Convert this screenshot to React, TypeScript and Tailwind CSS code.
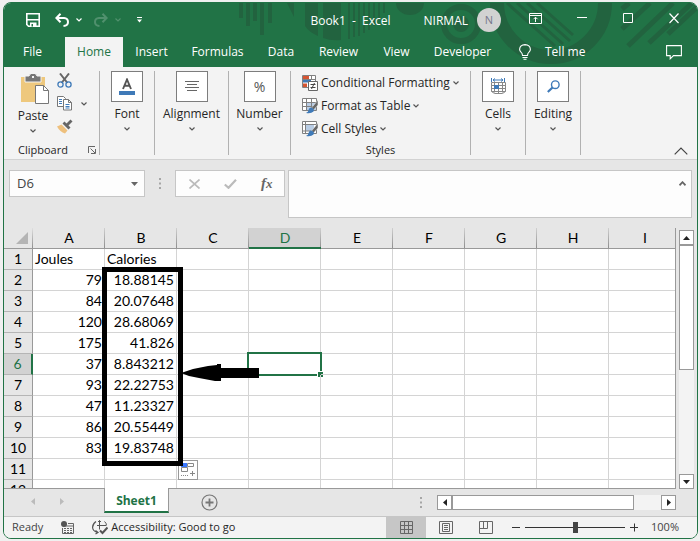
import type { ReactNode } from "react";
import { useState } from "react";

const columns = ["A", "B", "C", "D", "E", "F", "G", "H", "I"];

const data: string[][] = [
  ["Joules", "Calories"],
  ["79", "18.88145"],
  ["84", "20.07648"],
  ["120", "28.68069"],
  ["175", "41.826"],
  ["37", "8.843212"],
  ["93", "22.22753"],
  ["47", "11.23327"],
  ["86", "20.55449"],
  ["83", "19.83748"],
  [],
  [],
];

const tabs = [
  { name: "File", width: "w-[61px] pr-1" },
  { name: "Home", width: "w-[58px]" },
  { name: "Insert", width: "w-[57px]" },
  { name: "Formulas", width: "w-[75px]" },
  { name: "Data", width: "w-[52px]" },
  { name: "Review", width: "w-[63px]" },
  { name: "View", width: "w-[53px]" },
  { name: "Developer", width: "w-[79px]" },
];

function Chevron({ className = "" }: { className?: string }) {
  return (
    <svg width="6" height="4" viewBox="0 0 6 4" fill="none" stroke="currentColor" strokeWidth="1.2" className={className}>
      <path d="M0.5 0.5 L3 3 L5.5 0.5" />
    </svg>
  );
}

function Dots() {
  return (
    <svg width="2" height="11" viewBox="0 0 2 11" fill="#a6a6a6">
      <path d="M0 0h2v2H0zM0 4.5h2v2H0zM0 9h2v2H0z" />
    </svg>
  );
}

function TitlePattern() {
  return (
    <svg className="absolute top-0 right-0" width="693" height="64" viewBox="4 3 693 64" fill="#22633f">
      <path d="M239 3h4v15h-4zM246 3h4v23h-4zM253 3h4v18h-4zM260 3h4v32h-4zM268 3h4v20h-4z" />
      <path d="M287 3h7v14z" />
      <path d="M305 3h13v33q-9 -4 -13 -10zM323 3h18v37q-10 1 -18 -2z" />
      <path d="M348 3h2v36h-2zM353 3h2v34h-2zM358 3h2v33h-2zM363 3h2v30h-2zM368 3h2v27h-2zM373 3h2v23h-2zM378 3h2v17h-2zM383 3h2v10h-2z" />
      <path d="M396 3h28a14 12 0 0 1 -28 0z" />
      <circle cx="461" cy="24" r="17" fill="none" stroke="#22633f" strokeWidth="6" />
      <circle cx="461" cy="24" r="8" />
      <circle cx="551" cy="3" r="54" fill="none" stroke="#22633f" strokeWidth="14" />
      <g stroke="#22633f" strokeWidth="3">
        <path d="M507 3l48 43M517 3l46 41M527 3l43 38M537 3l36 32" />
        <path d="M628 46l45 -43M649 43l43 -40M622 29l28 -26M622 9l7 -6M668 34l29 -27" strokeWidth="5" />
      </g>
    </svg>
  );
}

function TitleBar() {
  return (
    <div className="relative flex h-[34px] items-center text-white">
      <div className="flex flex-1 items-center">
        <button aria-label="Save" className="ml-[22px]">
          <svg width="14" height="14" viewBox="0 0 14 14" fill="none" stroke="#fff" strokeWidth="1.6">
            <path d="M0.8 0.8h12.4v12.4H2.5L0.8 11.5zM1 6.7h12" />
            <path d="M4 9.5h6.5v4H4z" fill="#fff" stroke="none" />
            <path d="M5.5 11h1.5v2.5H5.5z" fill="#217346" stroke="none" />
          </svg>
        </button>
        <button aria-label="Undo" className="ml-[15px]">
          <svg width="14" height="14" viewBox="0 0 14 14" fill="none" stroke="#fff" strokeWidth="2">
            <path d="M5.5 0.8L1.4 5L5.5 9.2M1.5 5H9q4 0.3 4 4t-4.5 4" />
          </svg>
        </button>
        <Chevron className="ml-[7px]" />
        <button aria-label="Redo" className="ml-3 text-[#50906d]">
          <svg width="14" height="14" viewBox="0 0 14 14" fill="none" stroke="currentColor" strokeWidth="2">
            <path d="M8.5 0.8L12.6 5L8.5 9.2M12.5 5H5q-4 0.3 -4 4t4.5 4" />
          </svg>
        </button>
        <Chevron className="ml-[7px] text-[#50906d]" />
        <button aria-label="Customize Quick Access Toolbar" className="ml-4">
          <svg width="5" height="6" viewBox="0 0 5 6" fill="#fff">
            <path d="M0 0h5v1H0zM0 2.5h5L2.5 5.5z" />
          </svg>
        </button>
      </div>
      <span className="mt-[2px] whitespace-pre">Book1  -  Excel</span>
      <div className="flex flex-1 items-center justify-end">
        <span className="mt-[2px]">NIRMAL</span>
        <span className="ml-[9px] flex size-6 items-center justify-center rounded-full bg-[#d2d2d2] text-[11px] text-[#77778c]">N</span>
        <button aria-label="Ribbon Display Options" className="mb-[3px] ml-7">
          <svg width="13" height="11" viewBox="0 0 13 11" fill="none" stroke="#fff">
            <path d="M0.5 0.5h12v10H0.5zM0.5 2.5h12M6.5 9V4.5M4.5 6.2l2 -2l2 2" />
          </svg>
        </button>
        <button aria-label="Minimize" className="mb-[3px] ml-[35px]">
          <svg width="10" height="11" viewBox="0 0 10 11" stroke="#fff">
            <path d="M0 4.5h10" />
          </svg>
        </button>
        <button aria-label="Maximize" className="mb-[3px] ml-9">
          <svg width="10" height="11" viewBox="0 0 10 11" fill="none" stroke="#fff">
            <path d="M0.5 0.5h9v9h-9z" />
          </svg>
        </button>
        <button aria-label="Close" className="mr-[18px] mb-[3px] ml-9">
          <svg width="10" height="11" viewBox="0 0 10 11" stroke="#fff" strokeWidth="1.2">
            <path d="M0.5 0.5l9 9.5M9.5 0.5l-9 9.5" />
          </svg>
        </button>
      </div>
    </div>
  );
}

function TabBar() {
  return (
    <div className="relative flex h-[30px] text-white">
      {tabs.map((tab) => (
        <button
          key={tab.name}
          className={`${tab.width} ${tab.name === "Home" ? "bg-[#f3f3f3] text-[#217346]" : ""}`}
        >
          {tab.name}
        </button>
      ))}
      <button className="ml-[17px] flex items-center gap-[14px]">
        <svg width="12" height="16" viewBox="0 0 12 16" fill="none" stroke="#fff" strokeWidth="1.1">
          <path d="M3.5 11.5Q3.5 9.5 2 8.2Q0.6 6.8 0.6 5.2Q1 0.8 6 0.6Q11 0.8 11.4 5.2Q11.4 6.8 10 8.2Q8.5 9.5 8.5 11.5zM3.5 13.5h5M4.5 15.3h3" />
        </svg>
        Tell me
      </button>
      <button aria-label="Comments" className="mr-[15px] ml-auto">
        <svg width="16" height="15" viewBox="0 0 16 15" fill="none" stroke="#fff" strokeWidth="1.1">
          <path d="M0.6 0.6h14.8v10H7.5L4.2 13.8V10.6H0.6z" />
        </svg>
      </button>
    </div>
  );
}

function LargeButton({ label, width, children }: { label: string; width: string; children: ReactNode }) {
  return (
    <div className={`${width} shrink-0 border-r border-[#b1b1b1]`}>
      <button className="flex w-full flex-col items-center">
        <span className="flex h-[31px] w-8 items-center justify-center border border-[#7d7d7d] bg-white">{children}</span>
        <span className="mt-[3px] leading-[18px]">{label}</span>
        <Chevron className="mt-1 text-[#555]" />
      </button>
    </div>
  );
}

function BrushTable({ filled }: { filled: boolean }) {
  return (
    <svg width="16" height="16" viewBox="0 0 16 16" fill="none">
      <path d="M0.5 0.5h14v12h-14z" fill="#fff" />
      <path d={filled ? "M4 4h8v6H4z" : "M5 5h9v7H5z"} fill="#b9cde5" />
      <path
        d={filled ? "M0.5 0.5h14v12h-14zM0.5 3.5h14M3.5 0.5v12M0.5 10h9" : "M0.5 0.5h14v12h-14zM0.5 4.5h14M0.5 8.5h14M4.5 0.5v12M9.5 0.5v12"}
        stroke="#808080"
      />
      <path d="M16 2v5L11.5 12L9.5 10z" fill="#666" stroke="#f3f3f3" strokeWidth="0.5" />
      <path d="M9 9.5Q13 10.5 11.5 13.5Q9 16 4 15Q6.5 14 6.5 12Q7 9.5 9 9.5z" fill="#3f7ab8" />
    </svg>
  );
}

function Ribbon() {
  return (
    <div className="border-b border-[#d2d2d2] bg-[#f3f3f3] text-[#262626]">
      <div className="flex h-[92px] pt-1 pb-1">
        <div className="relative flex w-24 shrink-0 flex-col border-r border-[#b1b1b1]">
          <div className="flex">
            <button className="ml-[13px] flex w-8 flex-col items-center pt-[3px]">
              <svg width="28" height="31" viewBox="0 0 28 31" className="ml-1" fill="none">
                <path d="M0 3h24v25H0z" fill="#eec87d" />
                <path d="M4 2h4q1-3 4-3t4 3h4v6H4z" fill="#777" stroke="#f3f3f3" />
                <path d="M11 2h2v2h-2z" fill="#f3f3f3" />
                <path d="M14.5 11.5h8l5 5v13h-13z" fill="#fff" stroke="#777" />
                <path d="M22.5 11.5v5h5" stroke="#777" />
              </svg>
              <span className="mt-[2px] leading-[18px]">Paste</span>
              <Chevron className="mt-1 text-[#555]" />
            </button>
            <div className="ml-2 flex flex-col items-start gap-2 pt-[2px]">
              <button aria-label="Cut">
                <svg width="15" height="15" viewBox="0 0 15 15" fill="none">
                  <path d="M3 0.5L10.5 10M12 0.5L4.5 10" stroke="#666" strokeWidth="2" />
                  <circle cx="3.5" cy="11.5" r="2.6" stroke="#3f7ab8" strokeWidth="1.3" />
                  <circle cx="11.5" cy="11.5" r="2.6" stroke="#3f7ab8" strokeWidth="1.3" />
                </svg>
              </button>
              <button aria-label="Copy" className="flex items-center gap-[9px]">
                <svg width="15" height="15" viewBox="0 0 15 15" fill="none">
                  <path d="M0.5 0.5h6l2 2v8h-8z" fill="#fff" stroke="#777" />
                  <path d="M2 3.5h3M2 5.5h3M2 7.5h3" stroke="#3f7ab8" />
                  <path d="M6.5 3.5h5l3 3v7.5h-8z" fill="#fff" stroke="#777" />
                  <path d="M11.5 3.5v3h3" stroke="#777" />
                  <path d="M8.5 8.5h4M8.5 10.5h4M8.5 12h4" stroke="#3f7ab8" />
                </svg>
                <Chevron className="text-[#555]" />
              </button>
              <button aria-label="Format Painter">
                <svg width="16" height="15" viewBox="0 0 16 15">
                  <path d="M0 7.5L4.5 5.5L10.5 11.5L8 14.5Q3 13 0 7.5z" fill="#eec07d" />
                  <path d="M5.5 4.5L7.5 2.5L9.5 4.5L13.5 0.5L15.5 2.5L11.5 6.5L13.5 8.5L11.5 10.5z" fill="#666" />
                </svg>
              </button>
            </div>
          </div>
          <div className="mt-auto flex h-[10px] items-center pl-[14px] text-[11px] leading-[10px]">
            Clipboard
            <button aria-label="Clipboard settings" className="mr-[3px] ml-auto">
              <svg width="8" height="8" viewBox="0 0 8 8" fill="none" stroke="#666">
                <path d="M0.5 7V0.5H7M2.5 2.5L7 7M7.5 3v4.5H3" />
              </svg>
            </button>
          </div>
        </div>
        <LargeButton label="Font" width="w-[55px]">
          <svg width="16" height="18" viewBox="0 0 16 18">
            <path d="M4 11L8 1.5L12 11M5.5 7.8h5" fill="none" stroke="#555" strokeWidth="1.9" />
            <path d="M0 13h16v4H0z" fill="#3f7ab8" />
          </svg>
        </LargeButton>
        <LargeButton label="Alignment" width="w-[74px]">
          <svg width="14" height="11" viewBox="0 0 14 11" stroke="#666">
            <path d="M0 0.5h14M2 3.5h10M0 6.5h14M2 9.5h10" />
          </svg>
        </LargeButton>
        <LargeButton label="Number" width="w-[62px]">
          <span className="text-sm text-[#555]">%</span>
        </LargeButton>
        <div className="flex w-[180px] shrink-0 flex-col border-r border-[#b1b1b1] pl-[11px]">
          <button className="flex h-[23px] shrink-0 items-center gap-[3px] whitespace-nowrap">
            <svg width="16" height="16" viewBox="0 0 16 16" fill="none">
              <path d="M0.5 0.5h13v12h-13z" fill="#fff" stroke="#808080" />
              <path d="M1 1h6v3H1zM1 8.5h4v3.5H1z" fill="#d65532" />
              <path d="M1 4.5h8v3H1z" fill="#3f7ab8" />
              <path d="M0.5 4.5h13M9.5 0.5v4" stroke="#808080" />
              <path d="M6.5 6.5h9v9h-9z" fill="#fff" stroke="#666" />
              <path d="M8.5 9.5h5M8.5 12.5h5M12.5 8l-3 6" stroke="#444" />
            </svg>
            Conditional Formatting
            <Chevron className="text-[#555]" />
          </button>
          <button className="flex h-[23px] shrink-0 items-center gap-[3px] whitespace-nowrap">
            <BrushTable filled={false} />
            Format as Table
            <Chevron className="text-[#555]" />
          </button>
          <button className="flex h-[23px] shrink-0 items-center gap-[3px] whitespace-nowrap">
            <BrushTable filled />
            Cell Styles
            <Chevron className="text-[#555]" />
          </button>
          <span className="mt-auto mr-[11px] text-center text-[11px] leading-[10px]">Styles</span>
        </div>
        <LargeButton label="Cells" width="w-[55px]">
          <svg width="15" height="17" viewBox="0 0 15 17" fill="none">
            <path d="M0.5 0v4M13.5 0v4M2 2h10M4 0.5L2 2l2 1.5M10 0.5L12 2l-2 1.5" stroke="#3f7ab8" />
            <path d="M0.5 4.5h14v9l-3 2h-8l-3 -2zM0.5 7.5h14M0.5 10.5h14M0.5 13.5h14M3.5 4.5v10M7.5 4.5v11M11.5 4.5v10" stroke="#888" />
            <path d="M3 7h5v4H3z" fill="#3f7ab8" />
          </svg>
        </LargeButton>
        <LargeButton label="Editing" width="w-[55px]">
          <svg width="13" height="13" viewBox="0 0 13 13" fill="none" stroke="#3f7ab8">
            <circle cx="8.3" cy="4.7" r="3.8" strokeWidth="1.4" />
            <path d="M5.5 7.5L0.8 12" strokeWidth="2.2" />
          </svg>
        </LargeButton>
        <button aria-label="Collapse the Ribbon" className="mt-auto mr-[9px] ml-auto">
          <svg width="14" height="8" viewBox="0 0 14 8" fill="none" stroke="#444" strokeWidth="1.2" className="block">
            <path d="M0.7 7.3L7 1L13.3 7.3" />
          </svg>
        </button>
      </div>
    </div>
  );
}

function FormulaBar() {
  return (
    <div className="flex h-[68px] shrink-0 items-start bg-[#e6e6e6] pt-[10px] pr-[5px] pl-[5px]">
      <div className="flex h-[27px] w-[136px] items-center border border-[#c6c6c6] bg-[#fdfdfd] pr-[6px] pl-[7px]">
        <input aria-label="Name Box" defaultValue="D6" className="w-full min-w-0 bg-transparent text-[13px] text-[#444] outline-none" />
        <svg width="7" height="4" viewBox="0 0 7 4" fill="#666" className="shrink-0">
          <path d="M0 0h7L3.5 4z" />
        </svg>
      </div>
      <div className="flex h-[27px] w-[30px] items-center justify-center">
        <Dots />
      </div>
      <div className="flex h-[27px] w-[110px] items-center border border-[#c6c6c6] bg-[#fdfdfd] pl-[13px] text-[#bbb]">
        <button aria-label="Cancel">
          <svg width="11" height="10" viewBox="0 0 11 10" fill="none" stroke="currentColor" strokeWidth="1.7">
            <path d="M0.5 0.5l10 9M10.5 0.5l-10 9" />
          </svg>
        </button>
        <button aria-label="Enter" className="ml-6">
          <svg width="13" height="10" viewBox="0 0 13 10" fill="none" stroke="currentColor" strokeWidth="2.2">
            <path d="M0.8 5.5L4.5 8.8L12 0.8" />
          </svg>
        </button>
        <button
          aria-label="Insert Function"
          className="ml-6 font-['Liberation_Serif',serif] text-[15px] leading-4 font-bold text-[#666] italic"
        >
          f<span className="text-[13px]">x</span>
        </button>
      </div>
      <div className="ml-[3px] flex h-12 flex-1 items-start border border-[#c6c6c6] bg-[#fdfdfd] pr-[5px]">
        <input aria-label="Formula Bar" className="h-6 min-w-0 flex-1 bg-transparent px-2 outline-none" />
        <button aria-label="Collapse Formula Bar" className="mt-[10px]">
          <svg width="7" height="5" viewBox="0 0 7 5" fill="none" stroke="#666" strokeWidth="1.8" className="block">
            <path d="M0.5 4.3L3.5 1.2L6.5 4.3" />
          </svg>
        </button>
      </div>
    </div>
  );
}

function Sheet() {
  return (
    <div className="relative min-w-0 flex-1 overflow-hidden border-r border-b border-[#999] bg-white font-[Lato,sans-serif] text-sm text-black">
      <table className="w-full min-w-[677px] table-fixed border-separate border-spacing-0">
        <colgroup>
          <col className="w-[29px]" />
          {columns.map((column, i) => (
            <col key={column} className={i < columns.length - 1 ? "w-[72px]" : ""} />
          ))}
        </colgroup>
        <thead>
          <tr className="h-[21px]">
            <th className="border-b border-[#999] bg-[#e6e6e6] bg-linear-to-b from-[#e0e0e0] to-[#8f8f8f] bg-[length:1px_100%] bg-right bg-no-repeat p-0">
              <svg width="12" height="12" viewBox="0 0 12 12" fill="#b4b4b4" className="ml-3">
                <path d="M12 0v12H0z" />
              </svg>
            </th>
            {columns.map((column) => (
              <th
                key={column}
                scope="col"
                className={`border-b bg-linear-to-b from-[#d0d0d0] to-[#8f8f8f] bg-[length:1px_100%] bg-right bg-no-repeat p-0 leading-5 font-normal ${
                  column === "D"
                    ? "border-[#217346] bg-[#d2d2d2] text-[#217346] shadow-[inset_0_-1px_0_#217346]"
                    : "border-[#999] bg-[#e6e6e6]"
                }`}
              >
                {column}
              </th>
            ))}
          </tr>
        </thead>
        <tbody>
          {data.map((row, r) => (
            <tr key={r} className="h-[21px]">
              <th
                scope="row"
                className={`border-b border-b-[#b5b5b5] p-0 leading-5 font-normal ${
                  r === 5
                    ? "border-r-2 border-r-[#217346] bg-[#d2d2d2] text-[#217346]"
                    : "border-r border-r-[#999] bg-[#e6e6e6]"
                }`}
              >
                {r + 1}
              </th>
              {columns.map((column, c) => (
                <td
                  key={column}
                  className={`relative border-r border-b border-[#d4d4d4] px-[2px] py-0 leading-5 ${r > 0 ? "text-right" : ""}`}
                >
                  {row[c]}
                  {r === 5 && column === "D" && (
                    <span className="absolute -inset-[2px] border-2 border-[#217346]">
                      <span className="absolute -right-[4px] -bottom-[4px] size-[7px] border border-white bg-[#217346]" />
                    </span>
                  )}
                </td>
              ))}
            </tr>
          ))}
        </tbody>
      </table>
      <button aria-label="Auto Fill Options" className="absolute top-[232px] left-[174px] border border-[#999] bg-white p-[2px]">
        <svg width="14" height="14" viewBox="0 0 14 14" fill="none" stroke="#888">
          <path d="M0 0h6v4H0z" fill="#3b78ff" stroke="none" />
          <path d="M6.5 0.5h6v3h-6zM0.5 4.5h6v4h-6z" />
          <path d="M0 12.5h8" strokeDasharray="1 1" />
          <path d="M9 10.5h5M11.5 8v5" />
        </svg>
      </button>
      <div className="absolute top-[39px] left-[98px] h-[199px] w-[81px] border-[5px] border-black" />
      <svg width="78" height="18" viewBox="0 0 78 18" className="absolute top-[136px] left-[177px]">
        <path d="M0 9L12 5L27 2L36 1V0H40V4H78V14H40V17H34L18 14L8 12z" fill="#000" />
      </svg>
    </div>
  );
}

function VerticalScroll() {
  return (
    <div className="flex w-[21px] shrink-0 flex-col bg-[#e6e6e6] pt-[2px] pl-[3px]">
      <div className="flex w-[15px] flex-1 flex-col bg-[#f3f3f3]">
        <button aria-label="Scroll up" className="flex h-[15px] items-center justify-center border border-[#999] bg-white">
          <svg width="7" height="4" viewBox="0 0 7 4" fill="#222">
            <path d="M0 4h7L3.5 0z" />
          </svg>
        </button>
        <div className="h-[125px] border border-[#999] bg-white" />
        <button aria-label="Scroll down" className="mt-auto flex h-[15px] items-center justify-center border border-[#999] bg-white">
          <svg width="7" height="4" viewBox="0 0 7 4" fill="#222">
            <path d="M0 0h7L3.5 4z" />
          </svg>
        </button>
      </div>
    </div>
  );
}

function SheetBar() {
  return (
    <div className="flex h-7 shrink-0 border-b border-[#c6c6c6] bg-[#e6e6e6] pr-[21px]">
      <div className="flex w-[100px] items-center gap-[25px] pb-[2px] pl-[27px]">
        <button aria-label="Previous sheet">
          <svg width="4" height="7" viewBox="0 0 4 7" fill="#bbb">
            <path d="M4 0v7L0 3.5z" />
          </svg>
        </button>
        <button aria-label="Next sheet">
          <svg width="4" height="7" viewBox="0 0 4 7" fill="#bbb">
            <path d="M0 0v7L4 3.5z" />
          </svg>
        </button>
      </div>
      <button className="z-10 -mt-px h-[25px] w-[65px] border-x border-b-2 border-x-[#999] border-b-[#217346] bg-white pt-[3px] font-bold text-[#217346]">
        Sheet1
      </button>
      <button aria-label="New sheet" className="ml-8">
        <svg width="17" height="17" viewBox="0 0 17 17" fill="none" stroke="#777">
          <circle cx="8.5" cy="8.5" r="7.5" strokeWidth="1.2" />
          <path d="M4.5 8.5h8M8.5 4.5v8" strokeWidth="1.8" />
        </svg>
      </button>
      <div className="ml-auto flex items-center pb-px">
        <Dots />
        <div className="ml-[15px] flex h-[15px] w-[239px] bg-[#f3f3f3]">
          <button aria-label="Scroll left" className="flex w-[15px] items-center justify-center border border-[#999] bg-white">
            <svg width="4" height="7" viewBox="0 0 4 7" fill="#222">
              <path d="M4 0v7L0 3.5z" />
            </svg>
          </button>
          <div className="w-[182px] border border-[#999] bg-white" />
          <button aria-label="Scroll right" className="ml-auto flex w-[15px] items-center justify-center border border-[#999] bg-white">
            <svg width="4" height="7" viewBox="0 0 4 7" fill="#222">
              <path d="M0 0v7L4 3.5z" />
            </svg>
          </button>
        </div>
      </div>
    </div>
  );
}

function StatusBar() {
  const [zoom, setZoom] = useState(100);

  return (
    <div className="flex h-[21px] shrink-0 items-center bg-[#f3f3f3] pl-2 text-[11px] text-[#444]">
      <span>Ready</span>
      <button aria-label="Record Macro" className="ml-[18px]">
        <svg width="13" height="14" viewBox="0 0 13 14" fill="none" stroke="#666">
          <path d="M7 2.5h5.5v10h-11V7M1.5 5h11" />
          <path d="M3 7.5h8M3 9.5h8M3 11.5h8" strokeDasharray="2 1" />
          <circle cx="3" cy="3" r="3" fill="#555" stroke="none" />
        </svg>
      </button>
      <button className="ml-[18px] flex items-center gap-[3px] text-[#262626]">
        <svg width="16" height="15" viewBox="0 0 16 15" fill="none" stroke="#555">
          <path d="M4 1.5Q0.5 4 0.6 7.5T5.5 12.5M3.5 10.5l2.5 2l-2.5 1.5" strokeWidth="1.2" />
          <path d="M5 5.5h9M7.5 0.5v9M6 2l1.5 -1.5L9 2M12.5 1.5q2 1.5 2 4" />
          <path d="M8 10.5l2.5 2.5L15.5 7.5" strokeWidth="2" />
        </svg>
        Accessibility: Good to go
      </button>
      <div className="ml-auto flex h-full items-center">
        <button aria-label="Normal view" className="flex h-full w-10 items-center justify-center bg-[#c6c6c6]">
          <svg width="13" height="13" viewBox="0 0 13 13" fill="none" stroke="#666">
            <path d="M0.5 0.5h12v12h-12zM0.5 4.5h12M0.5 8.5h12M4.5 0.5v12M8.5 0.5v12" />
          </svg>
        </button>
        <button aria-label="Page Layout" className="flex h-full w-10 items-center justify-center">
          <svg width="14" height="13" viewBox="0 0 14 13" fill="none" stroke="#666">
            <path d="M0.5 0.5h13v12h-13zM3.5 2.5h7v8h-7zM5 4.5h4M5 6.5h4M5 8.5h4" />
          </svg>
        </button>
        <button aria-label="Page Break Preview" className="flex h-full w-10 items-center justify-center">
          <svg width="14" height="13" viewBox="0 0 14 13" fill="none" stroke="#666">
            <path d="M0.5 0.5h13v12h-13zM0.5 7.5h8v-7M4.5 0.5v7" />
          </svg>
        </button>
        <button aria-label="Zoom out" className="ml-[6px]">
          <svg width="8" height="9" viewBox="0 0 8 9" stroke="#333">
            <path d="M0 4.5h8" />
          </svg>
        </button>
        <input
          type="range"
          aria-label="Zoom"
          min={0}
          max={200}
          value={zoom}
          onChange={(e) => setZoom(Number(e.target.value))}
          className="mx-[5px] h-3 w-[100px] appearance-none bg-linear-to-b from-[#333] to-[#333] bg-[length:100%_1px] bg-center bg-no-repeat [&::-webkit-slider-thumb]:h-[11px] [&::-webkit-slider-thumb]:w-[5px] [&::-webkit-slider-thumb]:appearance-none [&::-webkit-slider-thumb]:bg-[#444]"
        />
        <button aria-label="Zoom in">
          <svg width="8" height="9" viewBox="0 0 8 9" stroke="#333">
            <path d="M0 4.5h8M4.5 0.5v8" />
          </svg>
        </button>
        <span className="w-[59px] pl-[13px]">{zoom}%</span>
      </div>
    </div>
  );
}

function App() {
  return (
    <div className="h-screen bg-[#f0f0f0] pt-[2px] pr-[2px] pb-[2px] pl-[3px] font-['Open_Sans','Noto_Sans',sans-serif] text-xs">
      <div className="flex h-full flex-col overflow-hidden rounded-lg border border-[#217346]">
        <header className="relative shrink-0 bg-[#217346]">
          <TitlePattern />
          <TitleBar />
          <TabBar />
        </header>
        <Ribbon />
        <FormulaBar />
        <main className="flex min-h-0 flex-1 bg-[#e6e6e6]">
          <Sheet />
          <VerticalScroll />
        </main>
        <SheetBar />
        <StatusBar />
      </div>
    </div>
  );
}

export default App;
